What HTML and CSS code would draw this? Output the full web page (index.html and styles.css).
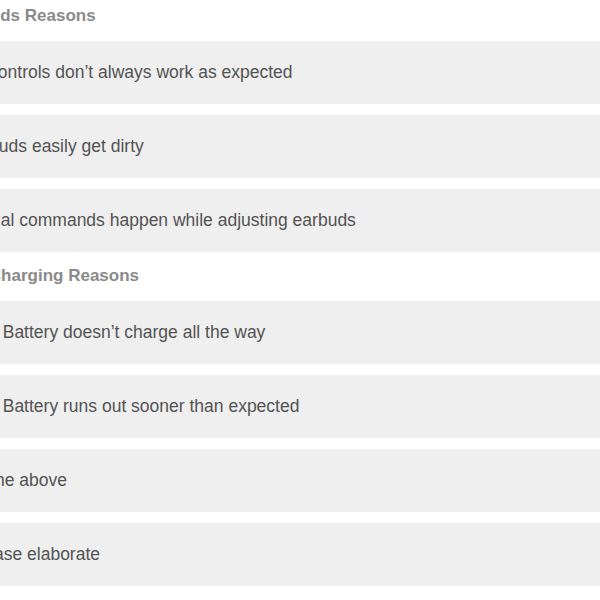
FILE: index.html
```html
<!DOCTYPE html>
<html lang="en">
<head>
<meta charset="utf-8">
<title>Reasons</title>
<link rel="stylesheet" href="styles.css">
</head>
<body>
<main class="survey">
  <h2 class="group-title">Earbuds Reasons</h2>
  <div class="option"><span class="option-label">Ear controls don’t always work as expected</span></div>
  <div class="option"><span class="option-label">Ear buds easily get dirty</span></div>
  <div class="option"><span class="option-label">Manual commands happen while adjusting earbuds</span></div>
  <h2 class="group-title">Bad Charging Reasons</h2>
  <div class="option"><span class="option-label">Case Battery doesn’t charge all the way</span></div>
  <div class="option"><span class="option-label">Case Battery runs out sooner than expected</span></div>
  <div class="option"><span class="option-label">Nor the above</span></div>
  <div class="option"><span class="option-label">* Please elaborate</span></div>
</main>
</body>
</html>
```

FILE: styles.css
```css
html, body {
  margin: 0;
  padding: 0;
  background: #ffffff;
  overflow: hidden;
}

body {
  font-family: "Liberation Sans", Arial, Helvetica, sans-serif;
}

.survey {
  display: flex;
  flex-direction: column;
  gap: 11px;
  padding-top: 3px;
  margin-left: -60px;
  width: calc(100% + 60px);
}

.group-title {
  margin: 0;
  height: 27px;
  line-height: 25px;
  padding-left: 12px;
  font-size: 17px;
  font-weight: bold;
  color: #8a8a8a;
  white-space: nowrap;
}

.option {
  height: 63px;
  display: flex;
  align-items: center;
  padding-left: 17px;
  background: #efefef;
  white-space: nowrap;
}

.option-label {
  font-size: 17.5px;
  color: #535353;
}
```
